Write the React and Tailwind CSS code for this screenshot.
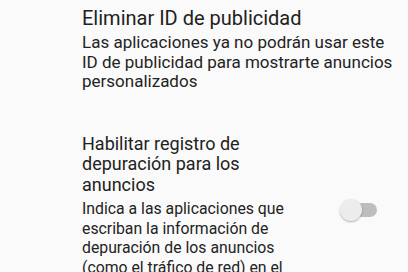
export default function App() {
  return (
    <div className="w-[408px] h-[272px] overflow-hidden bg-[#fafafa] text-[#212121]" style={{ fontFamily: "Roboto, 'Noto Sans', sans-serif" }}>
      <div className="pl-[82px] pt-[6px]">
        <div className="text-[20px] leading-[24px]">Eliminar ID de publicidad</div>
        <div className="mt-[3px] whitespace-nowrap text-[17px] leading-[19.5px] text-[#232323]">
          Las aplicaciones ya no podrán usar este
          <br />
          ID de publicidad para mostrarte anuncios
          <br />
          personalizados
        </div>
      </div>
      <div className="flex items-center pl-[82px] pt-[42px]">
        <div className="w-[222px] shrink-0">
          <div className="text-[18px] leading-[20.5px]">Habilitar registro de depuración para los anuncios</div>
          <div className="mt-[4px] text-[15.8px] leading-[19.5px] text-[#232323]">
            Indica a las aplicaciones que escriban la información de depuración de los anuncios (como el tráfico de red) en el registro
          </div>
        </div>
        <div className="ml-[36px] mb-[10px] relative w-[37px] h-[22px] flex items-center">
          <div className="absolute left-[15px] w-[22px] h-[14px] rounded-full bg-[#bdbdbd]" />
          <div className="absolute left-0 w-[22px] h-[22px] rounded-full bg-[#ececec] shadow-[0_1px_2px_rgba(0,0,0,0.3)]" />
        </div>
      </div>
    </div>
  );
}
